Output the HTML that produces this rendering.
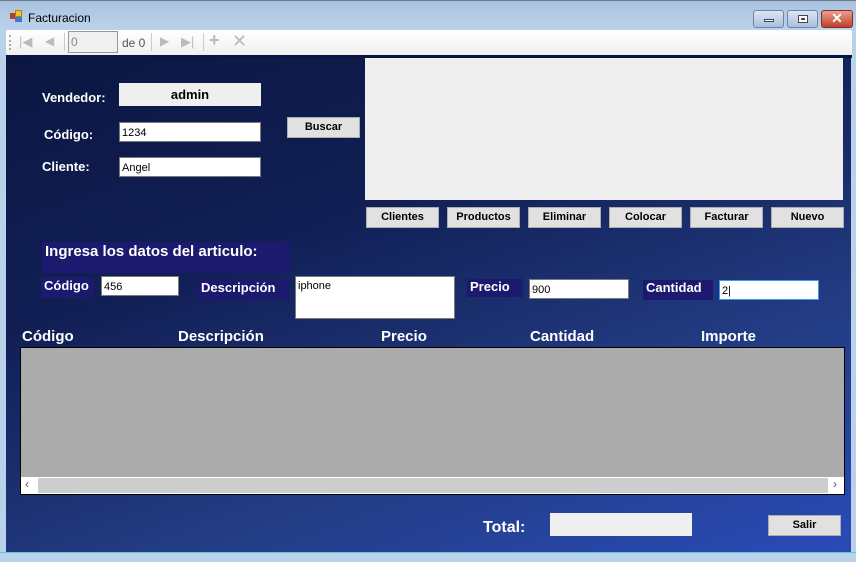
<!DOCTYPE html>
<html><head><meta charset="utf-8"><style>
*{margin:0;padding:0;box-sizing:border-box}
body{width:856px;height:562px;position:relative;overflow:hidden;font-family:"Liberation Sans",Arial,sans-serif;background:#b9d1ea}
.a{position:absolute}
#title{left:0;top:0;width:856px;height:32px;background:linear-gradient(#a9c3df,#bcd3ec);border-top:1px solid #6b7a8c}
#tb{left:6px;top:30px;width:846px;height:25px;background:linear-gradient(#fff,#f0f0f0);border-radius:2px}
#client{left:6px;top:55px;width:845px;height:497px;background:linear-gradient(160deg,#0b1640 0%,#111f55 35%,#233d85 70%,#2a4ab8 100%)}
.lbl{color:#fff;font-weight:bold;font-size:13px}
.box{background:#fff;border:1px solid #7a7a7a;font-size:11px;color:#000;padding:4px 2px 0;font-family:"Liberation Sans",sans-serif}
.btn{background:#e1e1e1;border:1px solid #adadad;font-size:11px;font-weight:bold;color:#000;text-align:center;line-height:19px}
.dk{background:#1b1a6e}
.hd{color:#fff;font-weight:bold;font-size:15px;top:328px}
.wb{top:10px;width:31px;height:18px;border:1px solid #6d84a5;border-radius:3px;background:linear-gradient(#dbe6f4,#a9bfdc)}
</style></head><body>
<div id="title" class="a"></div>
<div class="a" style="left:10px;top:13px;width:6px;height:6px;background:#c0392b"></div>
<div class="a" style="left:15px;top:10px;width:7px;height:7px;background:#f2c12e;border:1px solid #b08010"></div>
<div class="a" style="left:15px;top:17px;width:7px;height:5px;background:#3a7bd5"></div>
<div class="a" style="left:28px;top:11px;font-size:12px;color:#000">Facturacion</div>
<div class="a wb" style="left:753px"><div class="a" style="left:10px;top:8px;width:10px;height:3px;background:#fff;border:1px solid #445"></div></div>
<div class="a wb" style="left:787px"><div class="a" style="left:10px;top:4px;width:10px;height:8px;border:1px solid #445;background:#fff"><div style="margin:2px;height:2px;background:#445"></div></div></div>
<div class="a wb" style="left:821px;width:32px;border-color:#8a2a20;background:linear-gradient(#e8a090,#c0402a);color:#fff;font-weight:bold;font-size:14px;text-align:center;line-height:15px">✕</div>
<div id="tb" class="a"></div>
<div class="a" style="left:9px;top:35px;width:2px;height:15px;border-left:2px dotted #aaa"></div>
<div class="a" style="left:19px;top:34px;color:#bbb;font-size:13px">|◀</div>
<div class="a" style="left:45px;top:34px;color:#bbb;font-size:12px">◀</div>
<div class="a" style="left:64px;top:33px;width:1px;height:18px;background:#ccc"></div>
<div class="a" style="left:68px;top:31px;width:50px;height:22px;border:1px solid #999;background:#f0f0f0;font-size:12px;color:#888;padding:3px 2px">0</div>
<div class="a" style="left:122px;top:36px;font-size:12px;color:#555">de 0</div>
<div class="a" style="left:151px;top:33px;width:1px;height:18px;background:#ccc"></div>
<div class="a" style="left:160px;top:34px;color:#bbb;font-size:12px">▶</div>
<div class="a" style="left:181px;top:34px;color:#bbb;font-size:13px">▶|</div>
<div class="a" style="left:203px;top:33px;width:1px;height:18px;background:#ccc"></div>
<div class="a" style="left:209px;top:30px;color:#bbb;font-size:18px;font-weight:bold">+</div>
<div class="a" style="left:232px;top:31px;color:#bbb;font-size:18px">✕</div>
<div id="client" class="a"></div>
<div class="a" style="left:6px;top:55px;width:846px;height:3px;background:#0a1545"></div>
<div class="a" style="left:365px;top:58px;width:478px;height:142px;background:#efefef"></div>
<div class="a lbl" style="left:42px;top:90px">Vendedor:</div>
<div class="a" style="left:119px;top:83px;width:142px;height:23px;background:#efefef;font-weight:bold;font-size:13px;text-align:center;line-height:23px">admin</div>
<div class="a lbl" style="left:44px;top:127px">Código:</div>
<div class="a box" style="left:119px;top:122px;width:142px;height:20px">1234</div>
<div class="a lbl" style="left:42px;top:159px">Cliente:</div>
<div class="a box" style="left:119px;top:157px;width:142px;height:20px">Angel</div>
<div class="a btn" style="left:287px;top:117px;width:73px;height:21px">Buscar</div>
<div class="a btn" style="left:366px;top:207px;width:73px;height:21px">Clientes</div>
<div class="a btn" style="left:447px;top:207px;width:73px;height:21px">Productos</div>
<div class="a btn" style="left:528px;top:207px;width:73px;height:21px">Eliminar</div>
<div class="a btn" style="left:609px;top:207px;width:73px;height:21px">Colocar</div>
<div class="a btn" style="left:690px;top:207px;width:73px;height:21px">Facturar</div>
<div class="a btn" style="left:771px;top:207px;width:73px;height:21px">Nuevo</div>
<div class="a dk" style="left:42px;top:242px;width:248px;height:31px"></div>
<div class="a" style="left:45px;top:243px;color:#fff;font-weight:bold;font-size:15px">Ingresa los datos del articulo:</div>
<div class="a dk lbl" style="left:41px;top:277px;width:53px;height:21px;padding:1px 3px">Código</div>
<div class="a box" style="left:101px;top:276px;width:78px;height:20px">456</div>
<div class="a dk lbl" style="left:197px;top:280px;width:92px;height:20px;padding:0 4px">Descripción</div>
<div class="a box" style="left:295px;top:276px;width:160px;height:43px;padding-top:3px">iphone</div>
<div class="a dk lbl" style="left:467px;top:279px;width:56px;height:18px;padding:0 3px">Precio</div>
<div class="a box" style="left:529px;top:279px;width:100px;height:20px">900</div>
<div class="a dk lbl" style="left:643px;top:280px;width:70px;height:20px;padding:0 3px">Cantidad</div>
<div class="a box" style="left:719px;top:280px;width:100px;height:20px;border-color:#3399ff">2|</div>
<div class="a hd" style="left:22px">Código</div>
<div class="a hd" style="left:178px">Descripción</div>
<div class="a hd" style="left:381px">Precio</div>
<div class="a hd" style="left:530px">Cantidad</div>
<div class="a hd" style="left:701px">Importe</div>
<div class="a" style="left:20px;top:347px;width:825px;height:148px;background:#ababab;border:1px solid #000"></div>
<div class="a" style="left:21px;top:477px;width:823px;height:17px;background:#fff"></div>
<div class="a" style="left:38px;top:478px;width:790px;height:15px;background:#cdcdcd"></div>
<div class="a" style="left:25px;top:477px;font-size:12px;color:#555">‹</div>
<div class="a" style="left:833px;top:477px;font-size:12px;color:#555">›</div>
<div class="a lbl" style="left:483px;top:519px;font-size:16px">Total:</div>
<div class="a" style="left:550px;top:513px;width:142px;height:23px;background:#efefef"></div>
<div class="a btn" style="left:768px;top:515px;width:73px;height:21px">Salir</div>
<div class="a" style="left:0;top:552px;width:856px;height:10px;background:#b9d1ea;border-top:1px solid #5cc"></div>
</body></html>
